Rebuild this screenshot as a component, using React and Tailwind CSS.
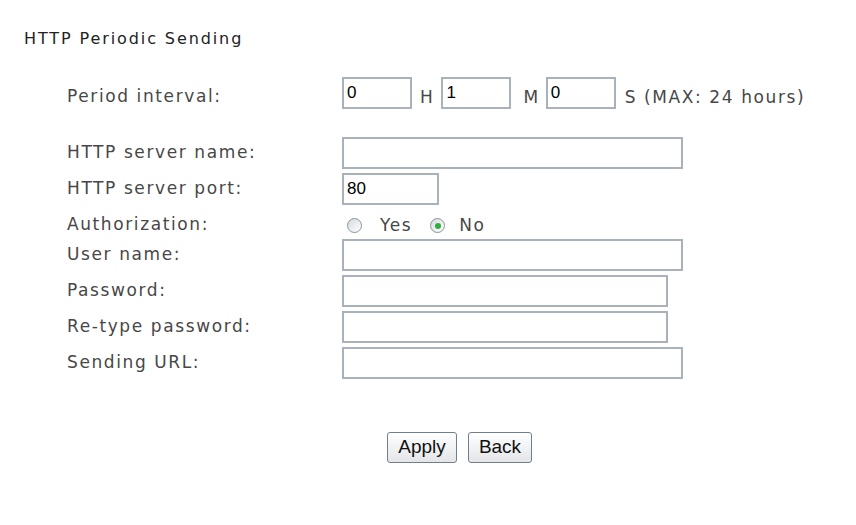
import React from "react";

const Field = ({ w, value = "" }) => (
  <input
    type="text"
    defaultValue={value}
    className="h-8 border-2 border-[#a9b2bc] bg-white px-[3px] text-[17px] text-black outline-none"
    style={{ width: w, fontFamily: "'Liberation Sans', Arial, sans-serif" }}
  />
);

const Radio = ({ checked }) => (
  <span className="flex h-[15px] w-[15px] items-center justify-center rounded-full border border-[#8a929a] bg-gradient-to-br from-[#d6dade] to-white">
    {checked && <span className="h-[6px] w-[6px] rounded-full bg-[#2fae3a]" />}
  </span>
);

const Label = ({ children, className = "" }) => (
  <div className={`w-[275px] shrink-0 text-[17px] tracking-[1.6px] text-[#474747] ${className}`}>{children}</div>
);

const Row = ({ label, children, h = "h-8", labelClass }) => (
  <div className={`flex items-center ${h}`}>
    <Label className={labelClass}>{label}</Label>
    {children}
  </div>
);

export default function App() {
  return (
    <div
      className="h-[525px] w-[856px] bg-white"
      style={{ fontFamily: "'DejaVu Sans', Verdana, sans-serif" }}
    >
      <div className="pl-[24px] pt-[30px] text-[16px] leading-[18px] tracking-[1.9px] text-[#222]">
        HTTP Periodic Sending
      </div>

      <div className="ml-[67px] mt-[29px]">
        <Row label="Period interval:" labelClass="pt-[8px]">
          <div className="flex items-center text-[17px] tracking-[1.6px] text-[#474747]">
            <Field w={70} value="0" />
            <span className="ml-2 mr-[7px] pt-[9px]">H</span>
            <Field w={70} value="1" />
            <span className="ml-[12px] mr-[6px] pt-[9px]">M</span>
            <Field w={70} value="0" />
            <span className="ml-[9px] pt-[9px]">S (MAX: 24 hours)</span>
          </div>
        </Row>

        <div className="mt-[28px] flex flex-col gap-[4px]">
          <Row label="HTTP server name:">
            <Field w={341} />
          </Row>
          <Row label="HTTP server port:">
            <Field w={97} value="80" />
          </Row>
          <Row label="Authorization:" h="h-[26px]" labelClass="pt-[5px]">
            <div className="flex items-center pl-[5px] pt-[7px] text-[17px] tracking-[1.6px] text-[#474747]">
              <Radio />
              <span className="ml-[18px]">Yes</span>
              <span className="ml-[18px]">
                <Radio checked />
              </span>
              <span className="ml-[14px]">No</span>
            </div>
          </Row>
          <Row label="User name:">
            <Field w={341} />
          </Row>
          <Row label="Password:">
            <Field w={326} />
          </Row>
          <Row label="Re-type password:">
            <Field w={326} />
          </Row>
          <Row label="Sending URL:">
            <Field w={341} />
          </Row>
        </div>
      </div>

      <div
        className="mt-[53px] flex justify-center gap-[11px] pl-[63px]"
        style={{ fontFamily: "'Liberation Sans', Arial, sans-serif" }}
      >
        <button className="h-[31px] w-[70px] rounded-[3px] border border-[#6f7f90] bg-gradient-to-b from-white to-[#e3e5e8] text-[19px] text-[#111]">
          Apply
        </button>
        <button className="h-[31px] w-[64px] rounded-[3px] border border-[#6f7f90] bg-gradient-to-b from-white to-[#e3e5e8] text-[19px] text-[#111]">
          Back
        </button>
      </div>
    </div>
  );
}
